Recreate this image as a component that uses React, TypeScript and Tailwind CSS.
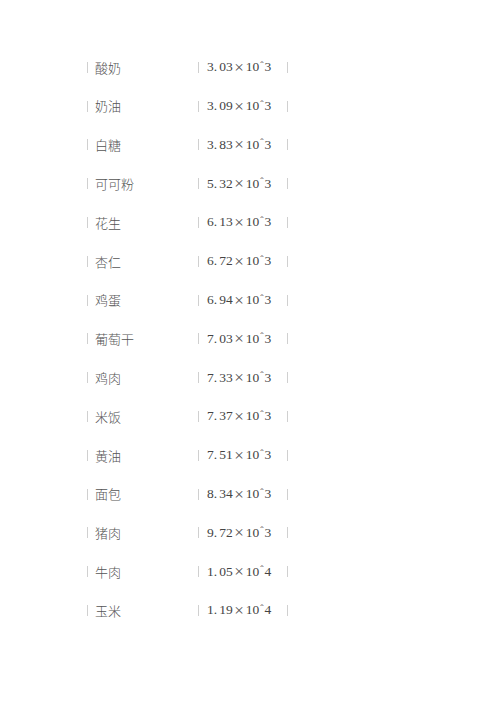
const rows: [string, string, string][] = [
  ['酸奶', '3.03', '3'],
  ['奶油', '3.09', '3'],
  ['白糖', '3.83', '3'],
  ['可可粉', '5.32', '3'],
  ['花生', '6.13', '3'],
  ['杏仁', '6.72', '3'],
  ['鸡蛋', '6.94', '3'],
  ['葡萄干', '7.03', '3'],
  ['鸡肉', '7.33', '3'],
  ['米饭', '7.37', '3'],
  ['黄油', '7.51', '3'],
  ['面包', '8.34', '3'],
  ['猪肉', '9.72', '3'],
  ['牛肉', '1.05', '4'],
  ['玉米', '1.19', '4'],
];

function Bar() {
  return <span className="block w-px h-[11px] bg-[#d0d0d0] shrink-0" />;
}

export default function App() {
  return (
    <div className="w-[500px] h-[707px] bg-white pt-[48px] pl-[87px]">
      {rows.map(([name, mant, exp]) => (
        <div key={name} className="flex items-center h-[38.8px]">
          <Bar />
          <span
            className="w-[110px] pl-[7px] text-[13px] font-light text-[#555]"
            style={{ fontFamily: '"Noto Sans CJK SC", sans-serif' }}
          >
            {name}
          </span>
          <Bar />
          <span className="w-[88px] pl-[8px] flex items-center text-[13.5px] text-[#444] font-['Liberation_Serif',serif]">
            <span>{mant.split('.')[0]}.</span>
            <span className="pl-[2px]">{mant.split('.')[1]}</span>
            <span className="inline-block w-[13px] text-center text-[17px] leading-none font-light text-[#555]">×</span>
            <span>10</span>
            <span className="text-[10px] -translate-y-[2px] px-[1px]">ˆ</span>
            <span>{exp}</span>
          </span>
          <Bar />
        </div>
      ))}
    </div>
  );
}
